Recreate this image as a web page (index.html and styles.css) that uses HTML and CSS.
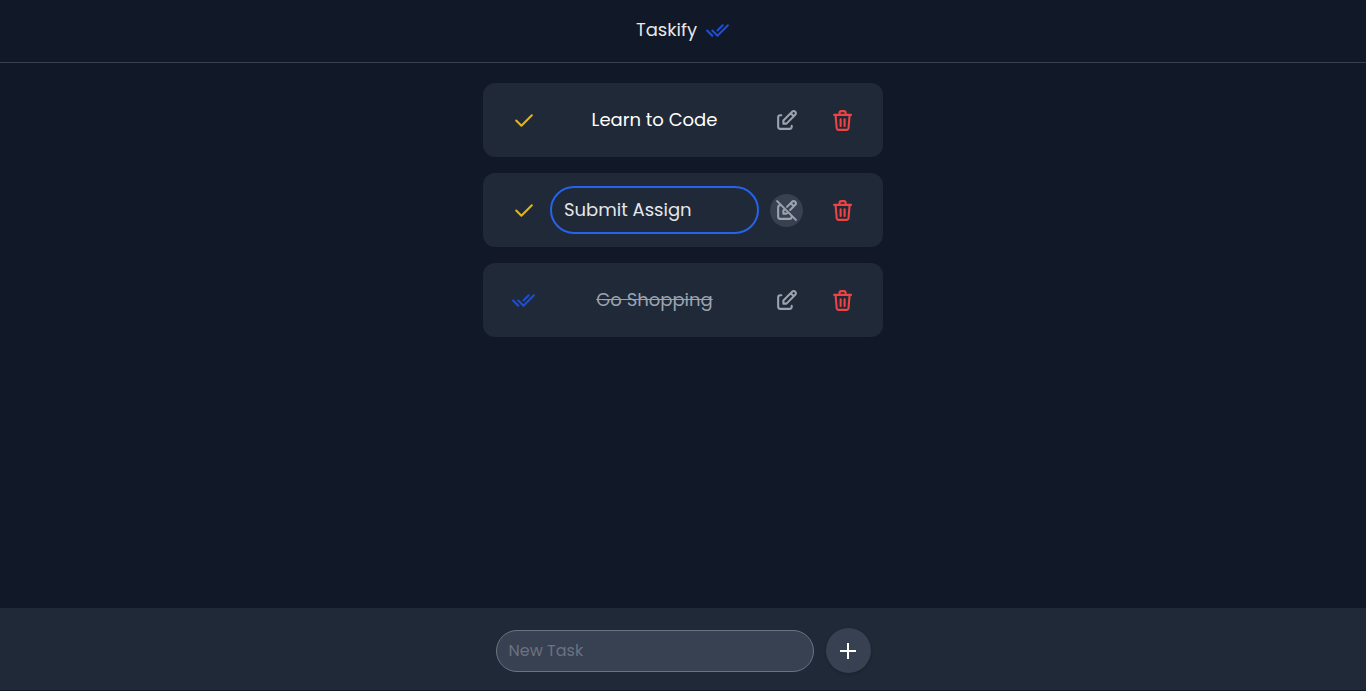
FILE: index.html
```html
<!DOCTYPE html>
<html lang="en">
<head>
<meta charset="utf-8">
<meta name="viewport" content="width=device-width, initial-scale=1">
<title>Taskify</title>
<link rel="stylesheet" href="styles.css">
</head>
<body>
<svg class="sprite" aria-hidden="true">
  <symbol id="done" viewBox="0 0 24 24"><path class="line" d="M5 12l5 5L20 7"/></symbol>
  <symbol id="done-all" viewBox="0 0 24 24"><path class="line" d="M7 12l5 5L22 7M2 12l5 5M12 12l5-5"/></symbol>
  <symbol id="edit" viewBox="0 0 24 24"><path class="line" d="M7 7H6a2 2 0 0 0-2 2v9a2 2 0 0 0 2 2h9a2 2 0 0 0 2-2v-1M20.385 6.585a2.1 2.1 0 0 0-2.97-2.97L9 12v3h3l8.385-8.415zM16 5l3 3"/></symbol>
  <symbol id="edit-off" viewBox="0 0 24 24"><path class="line" d="M7 7H6a2 2 0 0 0-2 2v9a2 2 0 0 0 2 2h9a2 2 0 0 0 2-2v-1M10.507 10.498l-1.507 1.502v3h3l1.493-1.498m2-2.01 4.89-4.907a2.1 2.1 0 0 0-2.97-2.97l-4.913 4.896M16 5l3 3M3 3l18 18"/></symbol>
  <symbol id="trash" viewBox="0 0 24 24"><path class="line" d="M4 6.6h16.2M10.2 10.8v6.4M14 10.8v6.4M5.4 7l1 12.2a2 2 0 0 0 2 1.8h7.4a2 2 0 0 0 2-1.8l1-12.2M9.2 6.4V4.6a1.6 1.6 0 0 1 1.6-1.6h2.6a1.6 1.6 0 0 1 1.6 1.6v1.8"/></symbol>
  <symbol id="plus" viewBox="0 0 24 24"><path fill="currentColor" d="M11 4h2v7h7v2h-7v7h-2v-7H4v-2h7z"/></symbol>
</svg>
<header class="header">
  <h1 class="brand">Taskify</h1>
  <svg class="icon icon-all"><use href="#done-all"/></svg>
</header>
<main class="tasks">
  <ul class="task-list">
    <li class="task">
      <button class="check" type="button" aria-label="Mark complete"><svg class="icon"><use href="#done"/></svg></button>
      <span class="task-name">Learn to Code</span>
      <button class="action" type="button" aria-label="Edit"><svg class="icon"><use href="#edit"/></svg></button>
      <button class="action delete" type="button" aria-label="Delete"><svg class="icon"><use href="#trash"/></svg></button>
    </li>
    <li class="task">
      <button class="check" type="button" aria-label="Mark complete"><svg class="icon"><use href="#done"/></svg></button>
      <input class="task-name task-input" type="text" aria-label="Task name" value="Submit Assign">
      <button class="action active" type="button" aria-label="Stop editing"><svg class="icon"><use href="#edit-off"/></svg></button>
      <button class="action delete" type="button" aria-label="Delete"><svg class="icon"><use href="#trash"/></svg></button>
    </li>
    <li class="task completed">
      <button class="check" type="button" aria-label="Mark incomplete"><svg class="icon icon-all"><use href="#done-all"/></svg></button>
      <span class="task-name">Go Shopping</span>
      <button class="action" type="button" aria-label="Edit"><svg class="icon"><use href="#edit"/></svg></button>
      <button class="action delete" type="button" aria-label="Delete"><svg class="icon"><use href="#trash"/></svg></button>
    </li>
  </ul>
</main>
<footer class="footer">
  <form class="new-task">
    <input class="new-input" type="text" aria-label="New Task" placeholder="New Task">
    <button class="add" type="submit" aria-label="Add task"><svg class="icon-plus"><use href="#plus"/></svg></button>
  </form>
</footer>
</body>
</html>
```

FILE: styles.css
```css
* {
  box-sizing: border-box;
}

body {
  margin: 0;
  min-height: 100vh;
  display: flex;
  flex-direction: column;
  background: #111827;
  color: #fff;
  font-family: Poppins, Inter, "Noto Sans", sans-serif;
  font-size: 18px;
  line-height: 28px;
}

button,
input {
  font: inherit;
  outline: none;
}

button {
  display: flex;
  align-items: center;
  justify-content: center;
  padding: 4px;
  border: 0;
  border-radius: 50%;
  background: none;
  cursor: pointer;
}

.sprite {
  display: none;
}

.line {
  fill: none;
  stroke: currentColor;
  stroke-width: 2;
  stroke-linecap: round;
  stroke-linejoin: round;
}

.icon {
  display: block;
  width: 25px;
  height: 25px;
}

.icon-plus {
  display: block;
  width: 24px;
  height: 24px;
}

.icon-all {
  color: #1d4ed8;
}

.header {
  display: flex;
  align-items: center;
  justify-content: center;
  gap: 8px;
  padding: 16px 0 18px;
  border-bottom: 1px solid #374151;
}

.brand {
  margin: 0;
  font-size: 18px;
  font-weight: 400;
  color: #e5e7eb;
}

.tasks {
  flex: 1;
  padding: 20px 16px;
}

.task-list {
  display: flex;
  flex-direction: column;
  gap: 16px;
  max-width: 400px;
  margin: 0 auto;
  padding: 0;
  list-style: none;
}

.task {
  display: flex;
  align-items: center;
  padding: 13px 24px;
  border-radius: 12px;
  background: #1f2937;
}

.check {
  color: #eab308;
}

.task-name {
  flex: 1;
  min-width: 0;
  margin: 0 11px 0 10px;
  padding: 10px 12px;
  text-align: center;
}

.task-input {
  padding: 8px 12px;
  border: 2px solid #2563eb;
  border-radius: 24px;
  background: none;
  color: #e5e7eb;
  text-align: left;
}

.completed .task-name {
  color: #9ca3af;
  text-decoration: line-through;
}

.action {
  color: #9ca3af;
}

.active {
  background: #374151;
}

.delete {
  margin-left: 23px;
  color: #ef4444;
}

.footer {
  padding: 20px 16px 17px;
  margin-bottom: 1px;
  background: #1f2937;
}

.new-task {
  display: flex;
  align-items: center;
  gap: 12px;
  max-width: 375px;
  margin: 0 auto;
}

.new-input {
  flex: 1;
  min-width: 0;
  padding: 8px 12px;
  border: 1px solid #6b7280;
  border-radius: 21px;
  background: #374151;
  color: #e5e7eb;
  font-size: 16px;
  line-height: 24px;
}

.new-input::placeholder {
  color: #6b7280;
  opacity: 1;
}

.add {
  width: 45px;
  height: 45px;
  background: #374151;
  color: #fff;
  box-shadow: 0 1px 3px rgba(0, 0, 0, 0.2);
}
```
